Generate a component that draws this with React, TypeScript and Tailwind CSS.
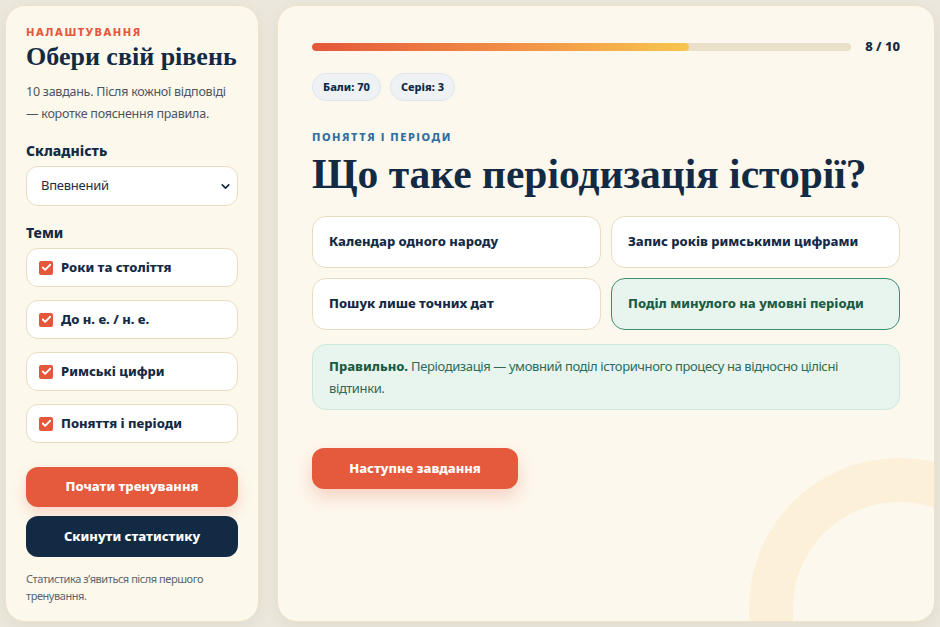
import { Check, ChevronDown } from 'lucide-react';

const topics = ['Роки та століття', 'До н. е. / н. е.', 'Римські цифри', 'Поняття і періоди'];

const options = [
  { text: 'Календар одного народу', correct: false },
  { text: 'Запис років римськими цифрами', correct: false },
  { text: 'Пошук лише точних дат', correct: false },
  { text: 'Поділ минулого на умовні періоди', correct: true },
];

const sans = "font-['Noto_Sans',sans-serif]";
const serif = "font-['Liberation_Serif',serif]";

function Sidebar() {
  return (
    <aside className="w-[254px] shrink-0 rounded-[20px] border border-[#efe2c8] bg-[#fdf8ec] px-5 pt-[18px] pb-5 shadow-[0_4px_14px_rgba(120,100,60,0.08)]">
      <div className="text-[11px] font-extrabold uppercase leading-[16px] tracking-[0.14em] text-[#e4573b]">Налаштування</div>
      <h1 className={`${serif} mt-[1px] whitespace-nowrap text-[26px] font-bold leading-[32px] text-[#132a45]`}>Обери свій рівень</h1>
      <p className="mt-[8px] text-[12.5px] leading-[22px] tracking-[-0.02em] text-[#4b5563]">
        10 завдань. Після кожної відповіді
        <br />— коротке пояснення правила.
      </p>

      <div className="mt-[16px] text-[14px] font-extrabold leading-[20px] text-[#132a45]">Складність</div>
      <div className="mt-[5px] flex h-[40px] items-center justify-between rounded-[12px] border border-[#eadcc0] bg-white pl-[14px] pr-[5px]">
        <span className="text-[13px] tracking-[-0.02em] text-[#1f2d3d]">Впевнений</span>
        <ChevronDown className="h-[13px] w-[13px] text-[#132a45]" strokeWidth={3} />
      </div>

      <div className="mt-[17px] text-[14px] font-extrabold leading-[20px] text-[#132a45]">Теми</div>
      <div className="mt-[5px] flex flex-col gap-[13px]">
        {topics.map((t) => (
          <label key={t} className="flex h-[39px] items-center gap-[8px] rounded-[12px] border border-[#eadcc0] bg-white px-[12px]">
            <span className="flex h-[14px] w-[14px] items-center justify-center rounded-[2px] bg-[#e4573b]">
              <Check className="h-[11px] w-[11px] text-white" strokeWidth={4} />
            </span>
            <span className="text-[13px] font-extrabold text-[#132a45]">{t}</span>
          </label>
        ))}
      </div>

      <button className="mt-[24px] flex h-[40px] w-full items-center justify-center rounded-[12px] bg-[#e55a3d] text-[13px] font-extrabold text-white shadow-[0_6px_14px_rgba(229,90,61,0.22)]">
        Почати тренування
      </button>
      <button className="mt-[9px] flex h-[41px] w-full items-center justify-center rounded-[12px] bg-[#122a44] text-[13px] font-extrabold text-white">
        Скинути статистику
      </button>
      <p className="mt-[13px] text-[11px] leading-[17px] tracking-[-0.04em] text-[#5b6472]">Статистика з’явиться після першого тренування.</p>
    </aside>
  );
}

function Quiz() {
  return (
    <main className="relative flex-1 overflow-hidden rounded-[20px] border border-[#efe2c8] bg-[#fdf8ee] px-[34px] pt-[32px] shadow-[0_4px_14px_rgba(120,100,60,0.08)]">
      <div className="pointer-events-none absolute left-[471px] top-[452px] h-[300px] w-[300px] rounded-full border-[44px] border-[#fcf0d8]" />

      <div className="relative">
        <div className="flex h-[18px] items-center gap-[14px]">
          <div className="h-[8px] flex-1 overflow-hidden rounded-full bg-[#eadfc8]">
            <div className="h-full w-[70%] rounded-full bg-gradient-to-r from-[#e4573b] via-[#f08c45] to-[#f7c64f]" />
          </div>
          <span className="text-[13px] font-extrabold text-[#132a45]">8 / 10</span>
        </div>

        <div className="mt-[17px] flex gap-[9px]">
          <span className="flex h-[28px] items-center rounded-full border border-[#dee5ec] bg-[#eef2f5] px-[10px] text-[11px] font-extrabold text-[#132a45]">Бали: 70</span>
          <span className="flex h-[28px] items-center rounded-full border border-[#dee5ec] bg-[#eef2f5] px-[10px] text-[11px] font-extrabold text-[#132a45]">Серія: 3</span>
        </div>

        <div className="mt-[28px] text-[11px] font-extrabold uppercase leading-[16px] tracking-[0.14em] text-[#2f6e9e]">Поняття і періоди</div>
        <h2 className={`${serif} mt-[5px] text-[41.5px] font-bold leading-[48px] text-[#132a45]`}>Що таке періодизація історії?</h2>

        <div className="mt-[18px] grid grid-cols-2 gap-x-[10px] gap-y-[10px]">
          {options.map((o) => (
            <div
              key={o.text}
              className={
                o.correct
                  ? 'flex h-[52px] items-center rounded-[14px] border-[1.5px] border-[#3f8d71] bg-[#e8f5ee] px-[16px] text-[13px] font-extrabold text-[#1d5c44]'
                  : 'flex h-[52px] items-center rounded-[14px] border-[1.5px] border-[#eadcc0] bg-white px-[16px] text-[13px] font-extrabold text-[#132a45]'
              }
            >
              {o.text}
            </div>
          ))}
        </div>

        <div className="mt-[14px] rounded-[14px] border border-[#cde8da] bg-[#e8f5ee] px-[16px] py-[10px] text-[13px] leading-[22px] tracking-[-0.03em] text-[#2e6a55]">
          <b className="font-extrabold tracking-normal text-[#1d5c44]">Правильно.</b> Періодизація — умовний поділ історичного процесу на відносно цілісні відтинки.
        </div>

        <button className="mt-[38px] flex h-[41px] w-[206px] items-center justify-center rounded-[12px] bg-[#e55a3d] text-[13px] font-extrabold text-white shadow-[0_8px_18px_rgba(229,90,61,0.25)]">
          Наступне завдання
        </button>
      </div>
    </main>
  );
}

export default function App() {
  return (
    <div className={`${sans} flex h-[627px] w-[940px] gap-[18px] bg-[#ebe7dc] px-[5px] py-[5px]`}>
      <Sidebar />
      <Quiz />
    </div>
  );
}
